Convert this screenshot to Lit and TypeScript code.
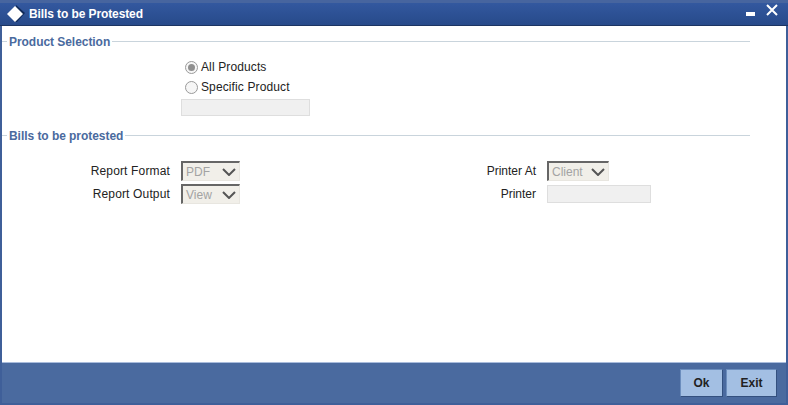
import { LitElement, html, css } from "lit";
import { customElement } from "lit/decorators.js";

@customElement("app-root")
export class AppRoot extends LitElement {
  static styles = css`
    :host { display: block; width: 788px; height: 405px; font-family: "Liberation Sans", Arial, sans-serif; font-size: 12px; color: #222; overflow: hidden; }
    .win { box-sizing: border-box; width: 788px; height: 405px; display: flex; flex-direction: column; background: #3f5f99; padding: 0 2px 2px 2px; }
    .title { flex: none; height: 26px; margin: 0 -2px; box-sizing: border-box; border-top: 3px solid #47659f; border-bottom: 1px solid #1c3462; background: linear-gradient(#33589f, #274a8a); display: flex; align-items: center; padding: 0 10px 0 7px; color: #fff; }
    .title svg { display: block; flex: none; }
    .title .name { font-weight: bold; font-size: 12px; margin-left: 4px; letter-spacing: -0.1px; }
    .spacer { flex: 1; }
    .ctl { display: flex; align-items: flex-start; gap: 11px; align-self: flex-start; margin-top: 1px; }
    .min { margin-top: 8px; }
    .body { flex: 1; background: #fff; padding: 0 36px 0 0; display: flex; flex-direction: column; }
    .legend { display: flex; align-items: center; height: 16px; color: #4a6a9e; font-weight: bold; font-size: 12px; letter-spacing: -0.05px; }
    .legend .lead { width: 5px; height: 1px; background: #c9d4dc; margin-bottom: 2px; }
    .legend .txt { padding: 0 2px; }
    .legend .rule { flex: 1; height: 1px; background: #c9d4dc; margin-bottom: 2px; }
    .l1 { margin-top: 8px; }
    .radios { margin: 7px 0 0 183px; display: flex; flex-direction: column; letter-spacing: 0.12px; }
    .radio { display: flex; align-items: center; height: 20px; gap: 3px; }
    .dot { box-sizing: border-box; width: 13px; height: 13px; border-radius: 50%; border: 1px solid #9a9a9a; background: #f6f6f6; display: flex; align-items: center; justify-content: center; }
    .dot i { display: block; width: 7px; height: 7px; border-radius: 50%; background: #8f8f8f; }
    .inp { box-sizing: border-box; border: 1px solid #dedede; background: #f0f0f0; }
    .pinp { width: 129px; height: 17px; margin: 2px 0 0 179px; }
    .l2 { margin-top: 12px; }
    .cols { display: grid; grid-template-columns: 366px 1fr; margin-top: 17px; }
    .form { display: grid; grid-template-columns: 168px auto; grid-auto-rows: 23px; column-gap: 11px; justify-content: start; align-items: start; }
    .col2 { column-gap: 11px; }
    .lab { text-align: right; line-height: 20px; letter-spacing: 0.15px; }
    .col2 .lab { letter-spacing: 0; }
    .sel { box-sizing: border-box; width: 59px; height: 20px; border-top: 2px solid #666; border-left: 2px solid #666; border-right: 1px solid #e8e6e0; border-bottom: 1px solid #e8e6e0; background: #f1efe9; color: #a3a3a3; display: flex; align-items: center; justify-content: space-between; padding: 1px 3px 0 3px; }
    .sel.client { width: 62px; }
    .print { width: 104px; height: 18px; margin-top: 1px; }
    .foot { flex: none; height: 41px; border-top: 1px solid #a9bcdc; background: #4a6a9f; display: flex; justify-content: flex-end; align-items: flex-start; gap: 3px; padding: 6px 9px 0 0; box-sizing: border-box; }
    .btn { box-sizing: border-box; width: 43px; height: 28px; background: #a3bfe3; border: 1px solid #6b8dbd; border-right-color: #33507f; border-bottom-color: #33507f; font-weight: bold; color: #222; display: flex; align-items: center; justify-content: center; font-size: 12px; }
    .btn.exit { width: 51px; }
  `;

  private chev() {
    return html`<svg width="14" height="8" viewBox="0 0 14 8"><path d="M1 1 L7 7 L13 1" fill="none" stroke="#555" stroke-width="2"/></svg>`;
  }

  render() {
    return html`<div class="win">
      <div class="title">
        <svg width="18" height="18" viewBox="0 0 18 18"><path d="M9 0 L18 8 L10 17 L8 17 Z" fill="#102a58"/><path d="M8 1 L16 9 L8 17 L0 9 Z" fill="#fff"/></svg>
        <span class="name">Bills to be Protested</span>
        <span class="spacer"></span>
        <div class="ctl">
          <svg class="min" width="9" height="4" viewBox="0 0 9 4"><rect width="9" height="4" fill="#fff"/></svg>
          <svg width="12" height="12" viewBox="0 0 12 12"><path d="M1 1 L11 11 M11 1 L1 11" stroke="#fff" stroke-width="2"/></svg>
        </div>
      </div>
      <div class="body">
        <div class="legend l1"><span class="lead"></span><span class="txt">Product Selection</span><span class="rule"></span></div>
        <div class="radios">
          <label class="radio"><span class="dot"><i></i></span>All Products</label>
          <label class="radio"><span class="dot"></span>Specific Product</label>
        </div>
        <div class="inp pinp"></div>
        <div class="legend l2"><span class="lead"></span><span class="txt">Bills to be protested</span><span class="rule"></span></div>
        <div class="cols">
          <div class="form">
            <span class="lab">Report Format</span>
            <div class="sel"><span>PDF</span>${this.chev()}</div>
            <span class="lab">Report Output</span>
            <div class="sel"><span>View</span>${this.chev()}</div>
          </div>
          <div class="form col2">
            <span class="lab">Printer At</span>
            <div class="sel client"><span>Client</span>${this.chev()}</div>
            <span class="lab">Printer</span>
            <div class="inp print"></div>
          </div>
        </div>
      </div>
      <div class="foot">
        <div class="btn">Ok</div>
        <div class="btn exit">Exit</div>
      </div>
    </div>`;
  }
}
